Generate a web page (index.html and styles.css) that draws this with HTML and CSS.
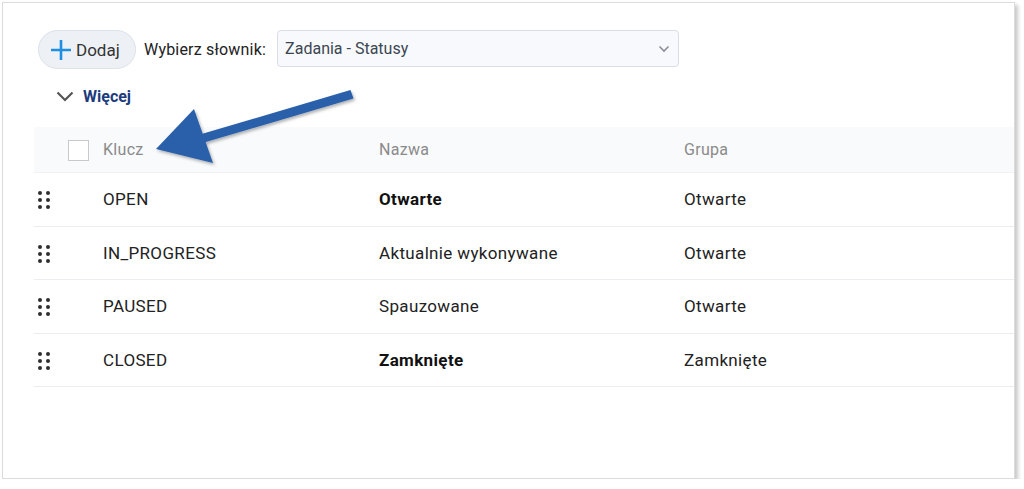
FILE: index.html
```html
<!DOCTYPE html>
<html lang="pl">
<head>
<meta charset="utf-8">
<title>Słowniki</title>
<link rel="stylesheet" href="styles.css">
</head>
<body>
<div class="card">
  <div class="toolbar">
    <button class="add-btn">
      <svg class="plus" width="22" height="22" viewBox="0 0 22 22"><path d="M11 1v20M1 11h20" stroke="#1e8fe1" stroke-width="2.6" fill="none"/></svg>
      <span>Dodaj</span>
    </button>
    <span class="label">Wybierz słownik:</span>
    <div class="select">
      <span>Zadania - Statusy</span>
      <svg width="12" height="8" viewBox="0 0 12 8"><path d="M1.5 1.5l4.5 4.5 4.5-4.5" stroke="#8a8f99" stroke-width="1.6" fill="none"/></svg>
    </div>
  </div>
  <div class="more">
    <svg width="18" height="11" viewBox="0 0 18 11"><path d="M1.5 1.5l7.5 7.5 7.5-7.5" stroke="#555" stroke-width="2.2" fill="none"/></svg>
    <span>Więcej</span>
  </div>
  <div class="table">
    <div class="row head">
      <div class="c0"><span class="check"></span></div>
      <div>Klucz</div>
      <div>Nazwa</div>
      <div>Grupa</div>
    </div>
    <div class="row">
      <div class="c0"><span class="grip"><i></i><i></i><i></i><i></i><i></i><i></i></span></div>
      <div>OPEN</div>
      <div class="b">Otwarte</div>
      <div>Otwarte</div>
    </div>
    <div class="row">
      <div class="c0"><span class="grip"><i></i><i></i><i></i><i></i><i></i><i></i></span></div>
      <div>IN_PROGRESS</div>
      <div>Aktualnie wykonywane</div>
      <div>Otwarte</div>
    </div>
    <div class="row">
      <div class="c0"><span class="grip"><i></i><i></i><i></i><i></i><i></i><i></i></span></div>
      <div>PAUSED</div>
      <div>Spauzowane</div>
      <div>Otwarte</div>
    </div>
    <div class="row">
      <div class="c0"><span class="grip"><i></i><i></i><i></i><i></i><i></i><i></i></span></div>
      <div>CLOSED</div>
      <div class="b">Zamknięte</div>
      <div>Zamknięte</div>
    </div>
  </div>
  <svg class="arrow" width="220" height="90" viewBox="0 0 220 90">
    <defs>
      <filter id="sh" x="-20%" y="-20%" width="140%" height="140%">
        <feDropShadow dx="1.5" dy="2" stdDeviation="1.5" flood-color="#000" flood-opacity="0.3"/>
      </filter>
    </defs>
    <g filter="url(#sh)" fill="#2a5faa">
      <polygon points="197.5,7 200.5,15.5 46,61 43.5,52.5"/>
      <polygon points="3,66 41,26 60,80"/>
    </g>
  </svg>
</div>
</body>
</html>
```

FILE: styles.css
```css
* { box-sizing: border-box; }
html, body { margin: 0; padding: 0; background: #fff; }
body { font-family: Roboto, "Noto Sans", Arial, sans-serif; color: #222; }

.card {
  position: relative;
  margin: 2px 0 0 2px;
  width: 1013px;
  height: 477px;
  border: 1px solid #dcdcdc;
  box-shadow: 3px 3px 4px rgba(0,0,0,0.22);
  overflow: hidden;
  background: #fff;
  padding: 27px 0 0 31px;
}

.toolbar {
  display: flex;
  align-items: center;
  height: 39px;
}
.add-btn {
  display: flex;
  align-items: center;
  gap: 4px;
  height: 39px;
  width: 98px;
  margin-left: 4px;
  padding: 0 0 0 11px;
  border: 1px solid #dde2ea;
  border-radius: 20px;
  background: #edf1f6;
  font-family: inherit;
  font-size: 17px;
  color: #333;
}
.plus { flex: none; }
.label {
  margin-left: 8px;
  font-size: 16px;
  letter-spacing: 0.2px;
  color: #222;
}
.select {
  display: flex;
  align-items: center;
  justify-content: space-between;
  margin-left: 11px;
  width: 402px;
  height: 37px;
  margin-top: -2px;
  padding: 0 8px 0 7px;
  border: 1px solid #d8dde7;
  border-radius: 4px;
  background: #f8f9fc;
  font-size: 16px;
  color: #3b4652;
}

.more {
  display: flex;
  align-items: center;
  gap: 9px;
  height: 34px;
  margin: 10px 0 0 22px;
  font-size: 16px;
  font-weight: 700;
  color: #1b3b7d;
}

.table {
  margin-top: 14px;
  width: 1100px;
}
.row {
  display: grid;
  grid-template-columns: 69px 276px 305px 1fr;
  align-items: center;
  height: 53.5px;
  border-bottom: 1px solid #ebedf0;
  font-size: 17px;
  letter-spacing: 0.35px;
  color: #222;
}
.row.head {
  height: 46px;
  background: #f9fafc;
  border-bottom: 1px solid #f0f1f4;
  color: #8a8a8a;
  font-size: 16px;
  letter-spacing: 0.3px;
}
.c0 { position: relative; height: 100%; }
.check {
  position: absolute;
  left: 34px;
  top: 13px;
  width: 21px;
  height: 21px;
  border: 1.5px solid #c9c9c9;
  background: #fff;
}
.grip {
  position: absolute;
  left: 4px;
  top: 18px;
  display: grid;
  grid-template-columns: 4px 4px;
  column-gap: 4px;
  row-gap: 3px;
}
.grip i {
  width: 4px;
  height: 4px;
  border-radius: 50%;
  background: #2f2f2f;
}
.b { font-weight: 700; color: #111; }

.arrow {
  position: absolute;
  left: 150px;
  top: 80px;
}
```
